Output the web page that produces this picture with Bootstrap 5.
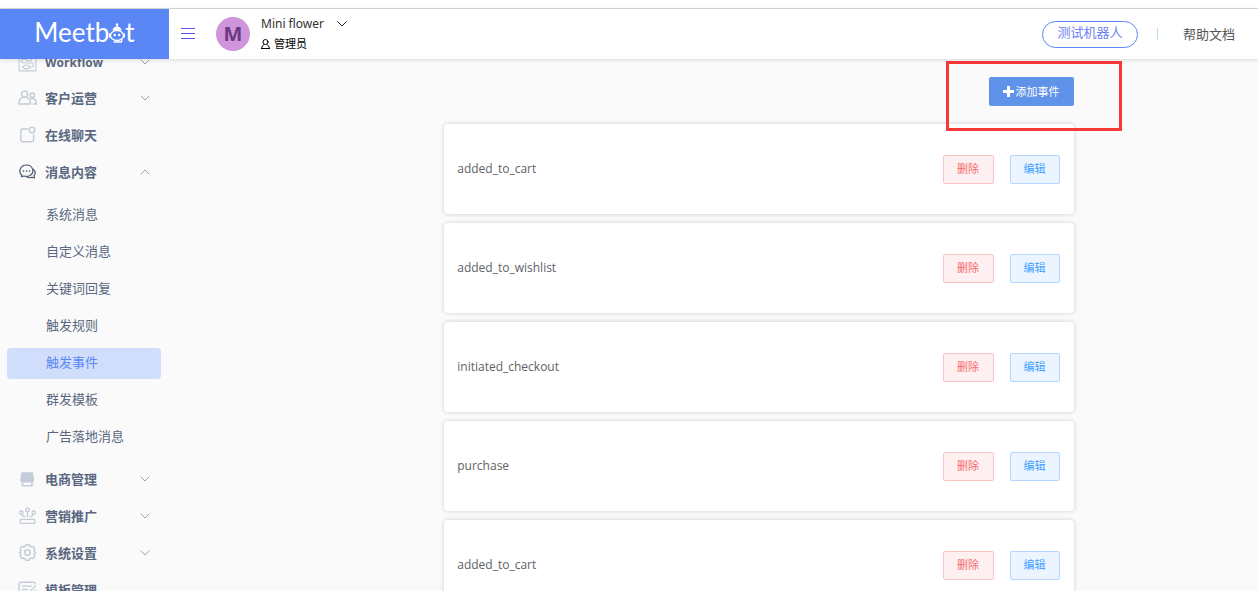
<!DOCTYPE html>
<html lang="zh-CN">
<head>
<meta charset="utf-8">
<meta name="viewport" content="width=device-width, initial-scale=1">
<title>Meetbot</title>
<link href="https://cdn.jsdelivr.net/npm/bootstrap@5.3.0/dist/css/bootstrap.min.css" rel="stylesheet">
<style>
body{font-family:"Noto Sans","Noto Sans CJK SC",sans-serif;font-size:13px;line-height:20px;color:#303133;background:#fafafa}
svg{display:block;flex:none;fill:none;stroke:currentColor;stroke-linecap:round;stroke-linejoin:round}
button{font-family:inherit}
.top-line{height:9px;background:#fff;border-bottom:1px solid #d9d9d9}
.topbar{height:50px;box-shadow:0 1px 4px rgba(0,21,41,.14);z-index:2}
.brand{width:169px;background:#5a87f5;font:400 26px/46px "Lato",sans-serif;padding-bottom:4px}
.brand svg{margin-top:2px}
.burger{color:#5b54ea}
.avatar{width:34px;height:34px;margin-left:17px;background:#cf94da;color:#6b3a87;font-size:20px;font-weight:700}
.account{line-height:20px;padding-left:11px}
.account .name{font-size:12px;gap:13px}
.account .role{font-size:11px}
.bot-btn{width:96px;height:27px;border:1px solid #5a87f5;color:#6f83f2;font-size:13px;line-height:20px}
.divider{width:1px;height:12px;margin:0 25px 0 19px;background:#b7dfe4}
.help-link{color:#555}
.header-end{padding-right:23px}
.side{width:169px}
.menu{margin-top:-15px}
.menu-row{height:37px;padding:0 19px 2px 18px;color:#596780;font-weight:600;gap:8px}
.menu-row:first-child{height:36px;padding-bottom:0}
.menu-row svg{color:#c3ccd8}
.menu-row .arrow{color:#9aa3b0}
.menu-row .latin{font-size:12px;line-height:18px;padding-top:2px;font-family:"Open Sans",sans-serif;font-weight:700}
.menu-row.open .lead-icon{color:#4d5a72}
.submenu{padding:6px 8px 5px 7px}
.submenu a{height:31px;margin:3px 0;padding:0 0 4px 39px;border-radius:4px;color:#596780}
.submenu a.active{background:#d0defb;color:#5a87f5}
.content{padding-top:18px}
.event-list{padding:0 3px}
.act{height:29px;border-radius:2px;font-size:11px;line-height:16px;padding:0}
.act-add{width:85px;background:#5f93e9;color:#fff;gap:2px}
.act-del{width:51px;background:#fef0f0;border:1px solid #fbc4c4;color:#f56c6c}
.act-edit{width:50px;background:#ecf5ff;border:1px solid #b3d8ff;color:#409eff}
.marker{position:absolute;top:-16px;right:-48px;width:176px;height:70px;border:3px solid #fb3737;z-index:1;pointer-events:none}
.event{height:90px;padding:0 14px 0 13px;background:#fff;border-radius:4px;box-shadow:0 0 4px rgba(0,0,0,.18);font-size:12px;color:#606266}
.event span{font-family:"Open Sans",sans-serif}
.events{margin-top:18px;gap:9px}
</style>
</head>
<body class="vh-100 d-flex flex-column overflow-hidden">
<div class="top-line flex-shrink-0"></div>
<header class="topbar d-flex align-items-center bg-white flex-shrink-0 position-relative">
  <a href="#" class="brand d-flex align-items-center justify-content-center text-white text-decoration-none h-100" aria-label="Meetbot"><span>Meetb</span>
    <svg width="16" height="22" viewBox="0 0 16 22" stroke-width="1.300"><circle cx="8" cy="2.500" r="1.200" fill="currentColor" stroke="none"/><path d="M8 3v3"/><path d="M3.500 8.500a4.500 4 0 0 1 9 0z" fill="currentColor" stroke="none"/><ellipse cx="8" cy="13.500" rx="6.500" ry="5"/><path d="M.7 12v3M15.300 12v3M5 20h7.500l.5-3"/><circle cx="5.800" cy="13" r="1.200" fill="currentColor" stroke="none"/><circle cx="10.200" cy="13" r="1.200" fill="currentColor" stroke="none"/></svg><span>t</span></a>
  <button class="btn burger border-0 p-0 ms-2 px-1" aria-label="菜单"><svg width="14" height="12" viewBox="0 0 14 12" stroke-linecap="butt"><path d="M0 .5h14M0 5.500h14M0 10.500h14"/></svg></button>
  <div class="avatar rounded-circle d-flex align-items-center justify-content-center">M</div>
  <div class="account">
    <div class="name d-flex align-items-center"><span>Mini flower</span><svg width="10" height="6" viewBox="0 0 10 6" stroke="#3b557d"><path d="M.5.500l4.500 4.500L9.500.500"/></svg></div>
    <div class="role d-flex align-items-center gap-1 text-black"><svg width="9" height="10" viewBox="0 0 9 10" stroke="#777"><circle cx="4.500" cy="3" r="2.500"/><path d="M.5 9.500q0-3 2.500-4M8.500 9.500q0-3-2.500-4M.5 9.500h8"/></svg>管理员</div>
  </div>
  <div class="header-end ms-auto d-flex align-items-center">
    <button class="bot-btn btn rounded-pill p-0 pb-1">测试机器人</button>
    <span class="divider"></span>
    <a href="#" class="help-link text-decoration-none">帮助文档</a>
  </div>
</header>
<div class="d-flex flex-grow-1 overflow-hidden">
  <aside class="side flex-shrink-0 overflow-hidden">
    <nav class="menu d-flex flex-column">
      <a href="#" class="menu-row d-flex align-items-center text-decoration-none"><svg class="lead-icon" width="19" height="19" viewBox="0 0 17 17"><path d="M1 1h15v15H1z"/><rect x="7" y="4" width="5" height="3" rx="1"/><rect x="5" y="11" width="5" height="3" rx="1"/><path d="M7 5.500H5a1.700 1.700 0 0 0 0 3.500h7a1.700 1.700 0 0 1 0 3.500h-2M5 12.500H3"/></svg><span class="latin">Workflow</span><svg class="arrow ms-auto" width="10" height="6" viewBox="0 0 10 6"><path d="M1 1l4 4 4-4"/></svg></a>
      <a href="#" class="menu-row d-flex align-items-center text-decoration-none"><svg class="lead-icon" width="19" height="19" viewBox="0 0 17 17" stroke-width="1.300"><circle cx="6" cy="5.500" r="2.700"/><path d="M.8 14.400c0-4 2-6 5.200-6s5.200 2 5.200 6z"/><circle cx="12.800" cy="6.500" r="2"/><path d="M11.500 9.600c3-1 5 1 5 4.800h-3"/></svg>客户运营<svg class="arrow ms-auto" width="10" height="6" viewBox="0 0 10 6"><path d="M1 1l4 4 4-4"/></svg></a>
      <a href="#" class="menu-row d-flex align-items-center text-decoration-none"><svg class="lead-icon" width="19" height="19" viewBox="0 0 17 17" stroke-width="1.300"><path d="M8.500 3.500H4Q2.500 3.500 2.500 5v8.500Q2.500 15 4 15h8.500q1.500 0 1.500-1.500V9"/><circle cx="12.500" cy="4.500" r="2.500"/></svg>在线聊天</a>
      <a href="#" class="menu-row open d-flex align-items-center text-decoration-none"><svg class="lead-icon" width="19" height="19" viewBox="-1 -1 19 19" stroke-width="1.200"><path d="M3 12.500C-1 9 1 2 7.500 2S16 9.500 11 12.500q-3 1.500-6 .5l-2.500.8z"/><path d="M14.500 6.500c2 2 2 4.500.500 6l.5 2.500-2.500-.8q-3 1.300-5.500-.5"/><path d="M4.500 8h.01M7.500 8h.01M10.500 8h.01" stroke-width="1.700"/></svg>消息内容<svg class="arrow ms-auto" width="10" height="6" viewBox="0 0 10 6"><path d="M1 5l4-4 4 4"/></svg></a>
      <div class="submenu d-flex flex-column">
        <a href="#" class="d-flex align-items-center text-decoration-none">系统消息</a>
        <a href="#" class="d-flex align-items-center text-decoration-none">自定义消息</a>
        <a href="#" class="d-flex align-items-center text-decoration-none">关键词回复</a>
        <a href="#" class="d-flex align-items-center text-decoration-none">触发规则</a>
        <a href="#" class="active d-flex align-items-center text-decoration-none" aria-current="page">触发事件</a>
        <a href="#" class="d-flex align-items-center text-decoration-none">群发模板</a>
        <a href="#" class="d-flex align-items-center text-decoration-none">广告落地消息</a>
      </div>
      <a href="#" class="menu-row d-flex align-items-center text-decoration-none"><svg class="lead-icon" width="19" height="19" viewBox="0 0 17 17"><path d="M3.500 3.500h9.500l1 6.500q0 1.500-1.500 1.500H4Q2.500 11.500 2.500 10z" fill="currentColor"/><path d="M4 12.500V15h8.500v-2.500" stroke-width="1.500"/></svg>电商管理<svg class="arrow ms-auto" width="10" height="6" viewBox="0 0 10 6"><path d="M1 1l4 4 4-4"/></svg></a>
      <a href="#" class="menu-row d-flex align-items-center text-decoration-none"><svg class="lead-icon" width="19" height="19" viewBox="0 0 17 17" stroke-width="1.200"><circle cx="8.500" cy="3.500" r="1.600"/><circle cx="3" cy="6" r="1.500"/><circle cx="14" cy="6" r="1.500"/><path d="M8.500 5.500v4M3.500 7.500Q4 9.500 6 9.500M13.500 7.500Q13 9.500 11 9.500"/><rect x="2" y="12" width="13" height="3.500" rx=".5"/></svg>营销推广<svg class="arrow ms-auto" width="10" height="6" viewBox="0 0 10 6"><path d="M1 1l4 4 4-4"/></svg></a>
      <a href="#" class="menu-row d-flex align-items-center text-decoration-none"><svg class="lead-icon" width="19" height="19" viewBox="0 0 17 17" stroke-width="1.300"><path d="M7 1.500h3l.7 1.600 1.300.5 1.600-.6L15 5l-.6 1.500.4 1.200 1 .8-1 .8-.4 1.200L15 12l-1.400 2-1.600-.6-1.300.5L10 15.500H7l-.7-1.600-1.300-.5-1.600.6L2 12l.6-1.500-.4-1.200-1-.8 1-.8.4-1.200L2 5l1.400-2 1.600.6 1.300-.5z"/><circle cx="8.500" cy="8.500" r="2.500"/></svg>系统设置<svg class="arrow ms-auto" width="10" height="6" viewBox="0 0 10 6"><path d="M1 1l4 4 4-4"/></svg></a>
      <a href="#" class="menu-row d-flex align-items-center text-decoration-none"><svg class="lead-icon" width="19" height="19" viewBox="0 0 17 17" stroke-width="1.200"><path d="M15.500 9v5q0 1.500-1.500 1.500H2.500Q1 15.500 1 14V3.500Q1 2 2.500 2H14q1.500 0 1.500 1.500M4 5.500h8M4 8.500h4.500M9 12L15.500 5.500"/></svg>模板管理</a>
    </nav>
  </aside>
  <main class="content flex-grow-1 overflow-hidden">
    <div class="row g-0">
      <div class="event-list offset-3 col-7">
        <div class="d-flex justify-content-end">
          <div class="position-relative">
            <button class="act act-add btn border-0 d-flex align-items-center justify-content-center"><svg width="11" height="11" viewBox="0 0 11 11" stroke-width="3" stroke-linecap="butt"><path d="M5.500 0v11M0 5.500h11"/></svg>添加事件</button>
            <div class="marker"></div>
          </div>
        </div>
        <div class="events d-flex flex-column">
          <div class="event d-flex align-items-center gap-3"><span class="me-auto">added_to_cart</span><button class="act act-del btn">删除</button><button class="act act-edit btn">编辑</button></div>
          <div class="event d-flex align-items-center gap-3"><span class="me-auto">added_to_wishlist</span><button class="act act-del btn">删除</button><button class="act act-edit btn">编辑</button></div>
          <div class="event d-flex align-items-center gap-3"><span class="me-auto">initiated_checkout</span><button class="act act-del btn">删除</button><button class="act act-edit btn">编辑</button></div>
          <div class="event d-flex align-items-center gap-3"><span class="me-auto">purchase</span><button class="act act-del btn">删除</button><button class="act act-edit btn">编辑</button></div>
          <div class="event d-flex align-items-center gap-3"><span class="me-auto">added_to_cart</span><button class="act act-del btn">删除</button><button class="act act-edit btn">编辑</button></div>
        </div>
      </div>
    </div>
  </main>
</div>
<script src="https://cdn.jsdelivr.net/npm/bootstrap@5.3.0/dist/js/bootstrap.bundle.min.js"></script>
</body>
</html>
